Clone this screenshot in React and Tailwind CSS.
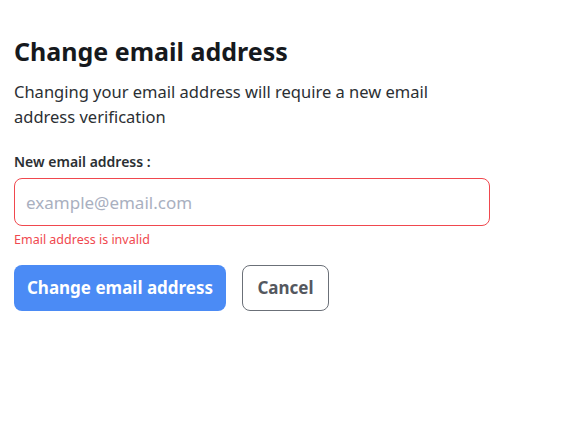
export default function App() {
  return (
    <div className="min-h-screen w-full bg-white px-[14px] pt-[34px] font-['Noto_Sans',sans-serif]">
      <h1 className="text-[25px] font-bold leading-[34px] text-[#16191d]">Change email address</h1>
      <p className="mt-[11px] w-[440px] text-[16.5px] leading-[25px] text-[#2b2f33]">
        Changing your email address will require a new email address verification
      </p>
      <label className="mt-[24px] block text-[14px] font-semibold leading-[18px] text-[#2b2f33]">
        New email address :
      </label>
      <input
        type="email"
        placeholder="example@email.com"
        className="mt-[7px] block h-[48px] w-[476px] rounded-[8px] border border-[#f0484e] px-[11px] text-[17px] text-[#2b2f33] outline-none placeholder:text-[#a9b0bf]"
      />
      <div className="mt-[6px] text-[12.5px] leading-[16px] text-[#f0484e]">Email address is invalid</div>
      <div className="mt-[17px] flex gap-[16px]">
        <button className="h-[46px] w-[212px] rounded-[8px] bg-[#4b8bf5] text-[17px] font-bold text-white">
          Change email address
        </button>
        <button className="h-[46px] w-[87px] rounded-[8px] border border-[#6b7078] text-[17px] font-bold text-[#54585f]">
          Cancel
        </button>
      </div>
    </div>
  );
}
